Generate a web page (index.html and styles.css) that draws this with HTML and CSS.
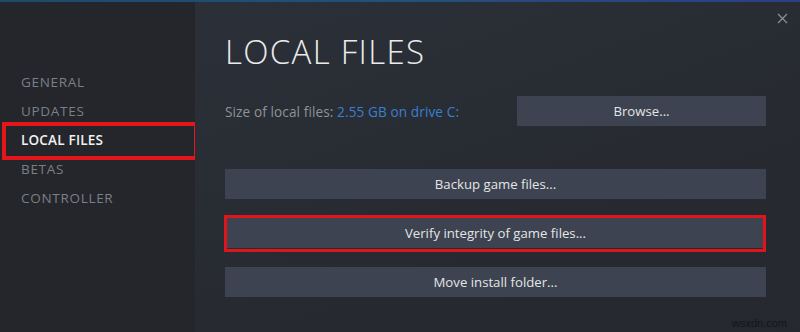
FILE: index.html
```html
<!DOCTYPE html>
<html>
<head>
<meta charset="utf-8">
<link rel="stylesheet" href="styles.css">
</head>
<body>
<div class="window">
  <div class="topline"></div>
  <div class="body">
    <nav class="sidebar">
      <div class="nav-item">GENERAL</div>
      <div class="nav-item">UPDATES</div>
      <div class="nav-item active">LOCAL FILES</div>
      <div class="nav-item">BETAS</div>
      <div class="nav-item">CONTROLLER</div>
    </nav>
    <main class="main">
      <div class="close">
        <svg width="11" height="11" viewBox="0 0 11 11"><path d="M1 1L10 10M10 1L1 10" stroke="#8a8f97" stroke-width="1.3" fill="none"/></svg>
      </div>
      <h1 class="title">LOCAL FILES</h1>
      <div class="size-row">
        <div class="size-text">Size of local files: <span class="size-val">2.55 GB on drive C:</span></div>
        <div class="btn browse">Browse...</div>
      </div>
      <div class="btn wide first">Backup game files...</div>
      <div class="btn wide verify">Verify integrity of game files...</div>
      <div class="btn wide">Move install folder...</div>
      <div class="watermark">wsxdn.com</div>
    </main>
  </div>
</div>
</body>
</html>
```
FILE: styles.css
```css
html, body {
  margin: 0;
  padding: 0;
  background: #262a31;
}
.window {
  width: 800px;
  height: 332px;
  display: flex;
  flex-direction: column;
  overflow: hidden;
  font-family: "Open Sans", "Liberation Sans", sans-serif;
}
.topline {
  height: 2px;
  background: linear-gradient(90deg, #1c4b6b 0%, #23507a 50%, #2b3f86 100%);
}
.body {
  flex: 1;
  display: flex;
}
.sidebar {
  width: 195px;
  background: #24262b;
  padding-top: 66px;
  box-sizing: border-box;
}
.nav-item {
  position: relative;
  height: 29px;
  line-height: 29px;
  padding-left: 21px;
  font-size: 13.5px;
  color: #7b7f86;
  letter-spacing: 0.7px;
}
.nav-item.active {
  color: #f2f2f2;
  font-weight: 600;
  letter-spacing: 0.2px;
}
.nav-item.active::after {
  content: "";
  position: absolute;
  left: 2px;
  right: -3px;
  top: -4px;
  bottom: -5px;
  border: 4px solid #e3161c;
  box-sizing: border-box;
}
.main {
  position: relative;
  flex: 1;
  padding: 0 34px 0 30px;
  background: linear-gradient(160deg, #2b3038 0%, #272a31 60%, #25282e 100%);
}
.close {
  position: absolute;
  right: 12px;
  top: 5px;
}
.title {
  margin: 0;
  padding-top: 27px;
  height: 45px;
  font-weight: 300;
  font-size: 33px;
  line-height: 45px;
  letter-spacing: 1.3px;
  color: #ebebeb;
}
.size-row {
  margin-top: 22px;
  display: flex;
  align-items: center;
  justify-content: space-between;
}
.size-text {
  font-size: 13.6px;
  letter-spacing: 0.1px;
  color: #8d939a;
}
.size-val {
  color: #3b7fd0;
}
.btn {
  height: 30px;
  line-height: 30px;
  background: #3d4350;
  color: #e4e5e7;
  font-size: 13.2px;
  text-align: center;
  box-sizing: border-box;
}
.browse {
  width: 249px;
}
.wide {
  margin-top: 19px;
  position: relative;
}
.wide.first {
  margin-top: 43px;
}
.verify::after {
  content: "";
  position: absolute;
  left: -1px;
  right: 0;
  top: -3px;
  bottom: -4px;
  border: 3px solid #e0141b;
}
.watermark {
  position: absolute;
  right: 13px;
  bottom: 3px;
  font-family: "Liberation Sans", sans-serif;
  font-size: 11px;
  color: #141517;
}
```
